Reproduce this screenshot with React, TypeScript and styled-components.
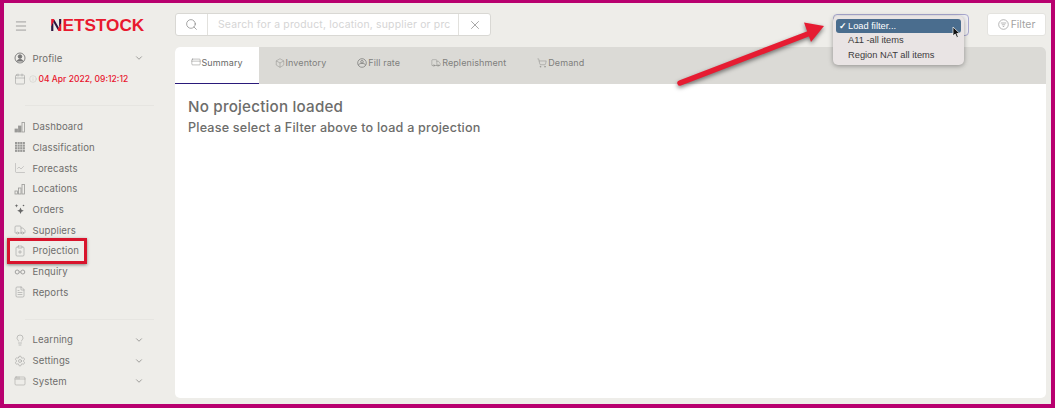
import React from 'react';
import styled, { createGlobalStyle } from 'styled-components';
import {
  AppWindow, Box, Calendar, ChartLine, ChevronDown, ClipboardPlus, CreditCard,
  FileText, Info, Lightbulb, Menu, Search, Settings, ShoppingCart, Truck, X,
} from 'lucide-react';

const GlobalStyle = createGlobalStyle`
  html, body { margin: 0; padding: 0; }
  body { font-family: Inter, "Open Sans", sans-serif; background: #fff; overflow: hidden; }
`;

const Frame = styled.div`
  position: relative;
  box-sizing: border-box;
  width: 1055px;
  height: 408px;
  border: 4px solid #b8006f;
  border-top-width: 3px;
  background: #eeede9;
  display: flex;
  color: #6d6d6b;
`;

const Sidebar = styled.aside`
  width: 171px;
  flex: none;
  display: flex;
  flex-direction: column;
`;

const Brand = styled.div`
  height: 45px;
  display: flex;
  align-items: center;
  padding-left: 10px;
  color: #808080;
`;

const Logo = styled.div`
  margin-left: 22px;
  font-family: "Liberation Sans", sans-serif;
  font-size: 17.2px;
  font-weight: 700;
  color: #e8192f;
`;

const LogoN = styled.span`
  background: linear-gradient(118deg, #e8192f 30%, #2c1540 33%, #2c1540 66%, #e8192f 69%);
  -webkit-background-clip: text;
  background-clip: text;
  color: transparent;
`;

const Row = styled.div`
  height: 20.7px;
  display: flex;
  align-items: center;
  padding-left: 10px;
  font-size: 9.6px;
  letter-spacing: 0.1px;
  color: #6e6e6c;
`;

const IconSlot = styled.span<{ $narrow?: boolean }>`
  width: ${p => (p.$narrow ? 14.5 : 18.5)}px;
  flex: none;
  display: flex;
  color: #999997;
`;

const RowChevron = styled(ChevronDown)`
  position: absolute;
  left: 130px;
  color: #8e8e8c;
`;

const DateText = styled.span`
  margin-left: 2px;
  color: #e8152e;
  font-size: 8.5px;
  font-weight: 500;
  letter-spacing: 0;
`;

const Divider = styled.div<{ $top: number; $bottom: number }>`
  height: 1px;
  margin: ${p => p.$top}px 21px ${p => p.$bottom}px 21px;
  background: #e6e5e1;
`;

const Main = styled.main`
  flex: 1;
  min-width: 0;
  display: flex;
  flex-direction: column;
  padding-right: 5px;
`;

const Toolbar = styled.div`
  height: 44px;
  flex: none;
  display: flex;
  align-items: flex-start;
  padding-top: 10px;
  box-sizing: border-box;
`;

const SearchBox = styled.div`
  width: 316px;
  height: 23px;
  box-sizing: border-box;
  display: flex;
  background: #fff;
  border: 1px solid #d9d8d4;
  border-radius: 3px;
`;

const SearchCell = styled.div`
  width: 31px;
  flex: none;
  display: flex;
  align-items: center;
  justify-content: center;
  color: #777;
`;

const SearchText = styled.div`
  flex: 1;
  min-width: 0;
  padding-left: 10px;
  border-left: 1px solid #e2e1dd;
  border-right: 1px solid #e2e1dd;
  font-size: 10.4px;
  line-height: 21px;
  letter-spacing: 0.2px;
  color: #d5d5d5;
  white-space: nowrap;
  overflow: hidden;
`;

const ToolbarRight = styled.div`
  margin-left: auto;
  display: flex;
  align-items: flex-start;
  gap: 18px;
`;

const FilterSelect = styled.div`
  width: 136px;
  height: 22px;
  margin-top: 1px;
  box-sizing: border-box;
  background: #f2f1f3;
  border: 1px solid #a9a8cf;
  border-radius: 4px;
`;

const FilterButton = styled.div`
  width: 59px;
  height: 23px;
  box-sizing: border-box;
  display: flex;
  align-items: center;
  justify-content: center;
  gap: 2px;
  background: #fff;
  border: 1px solid #e4e3df;
  border-radius: 3px;
  font-size: 10.4px;
  color: #a3a3a3;
`;

const Card = styled.section`
  width: 871px;
  height: 351px;
  background: #fff;
  border-radius: 5px;
  overflow: hidden;
`;

const TabBar = styled.div`
  height: 37px;
  display: flex;
  background: #dbdad6;
`;

const Tab = styled.div<{ $active?: boolean }>`
  display: flex;
  align-items: center;
  gap: 1px;
  padding: 0 15.5px 6px;
  font-size: 9px;
  letter-spacing: 0.1px;
  color: #7f7f7d;
  box-sizing: border-box;
  ${p => p.$active && `
    background: #fff;
    color: #6a6a68;
    border-bottom: 1px solid #2a1a7a;
    border-radius: 4px 0 0 0;
    width: 84px;
  `}
`;

const Body = styled.div`
  padding: 13px 13px;
`;

const Heading = styled.h1`
  margin: 0;
  font-size: 15.2px;
  line-height: 20px;
  font-weight: 500;
  letter-spacing: 0.2px;
  color: #6d6d6b;
`;

const SubHeading = styled.p`
  margin: 2px 0 0;
  font-size: 12.6px;
  line-height: 18px;
  font-weight: 500;
  letter-spacing: 0.2px;
  color: #6d6d6b;
`;

const Highlight = styled.div`
  position: absolute;
  left: 3px;
  top: 235px;
  width: 80px;
  height: 26px;
  box-sizing: border-box;
  border: 3px solid #d8142c;
  box-shadow: 0 1px 3px rgba(0, 0, 0, 0.45);
`;

const Arrow = styled.svg`
  position: absolute;
  left: 670px;
  top: 15px;
  overflow: visible;
  filter: drop-shadow(0 2px 2px rgba(0, 0, 0, 0.5));
`;

const Popover = styled.div`
  position: absolute;
  left: 829px;
  top: 13px;
  width: 131px;
  height: 49px;
  box-sizing: border-box;
  padding: 2.5px 3px;
  background: #e9e4e4;
  border-radius: 5px;
  box-shadow: 0 1px 5px rgba(0, 0, 0, 0.35);
  font-family: "Liberation Sans", sans-serif;
  font-size: 9.3px;
  color: #3c3a3c;
`;

const Option = styled.div<{ $selected?: boolean }>`
  position: relative;
  height: 14.7px;
  line-height: 14.7px;
  padding-left: 12px;
  border-radius: 3px;
  ${p => p.$selected && 'background: #4a6d8e; color: #fff;'}
`;

const Check = styled.span`
  position: absolute;
  left: 3px;
  font-weight: 700;
`;

const Cursor = styled.svg`
  position: absolute;
  left: 948px;
  top: 23px;
`;

const BarsIcon = ({ outline }: { outline?: boolean }) => (
  <svg width="12" height="12" viewBox="0 0 12 12" fill={outline ? 'none' : 'currentColor'} stroke="currentColor" strokeWidth="0.8">
    <rect x="1" y="8" width="2.5" height="3" />
    <rect x="4.5" y="5" width="2.5" height="6" />
    <rect x="8" y="1.5" width="2.5" height="9.5" fill="none" />
  </svg>
);

const DenseGridIcon = () => (
  <svg width="12" height="12" viewBox="0 0 12 12" fill="currentColor">
    {[0, 1, 2, 3].flatMap(r =>
      [0, 1, 2, 3].map(c => <rect key={`${r}-${c}`} x={1 + c * 2.6} y={1 + r * 2.6} width="2.1" height="2.1" />),
    )}
  </svg>
);

const OrdersIcon = () => (
  <svg width="12" height="12" viewBox="0 0 12 12" fill="#666">
    <path d="M6.5 4.500l1 2.300 2.300 1-2.300 1-1 2.300-1-2.300-2.300-1 2.300-1z" />
    <path d="M2.5 1l.5 1.300 1.300.5-1.300.5-.5 1.300-.5-1.300-1.300-.5 1.300-.5z" />
    <circle cx="9.5" cy="2.5" r="0.8" />
  </svg>
);

const EnquiryIcon = () => (
  <svg width="12" height="12" viewBox="0 0 12 12" fill="none" stroke="currentColor" strokeWidth="0.9">
    <circle cx="3.2" cy="6" r="2" />
    <circle cx="8.8" cy="6" r="2" />
    <path d="M5.2 6h1.600" />
  </svg>
);

const ProfileIcon = () => (
  <svg width="12" height="12" viewBox="0 0 12 12" fill="none" stroke="#777" strokeWidth="0.9">
    <circle cx="6" cy="6" r="5" />
    <circle cx="6" cy="4.6" r="1.8" fill="#777" />
    <path d="M2.6 9.600c.6-1.500 2-2.100 3.400-2.100s2.800.6 3.400 2.100" fill="#777" />
  </svg>
);

const FillRateIcon = () => (
  <svg width="10" height="10" viewBox="0 0 10 10" fill="none" stroke="currentColor" strokeWidth="0.8">
    <circle cx="5" cy="5" r="4.3" />
    <circle cx="5" cy="3.8" r="1.3" />
    <path d="M1.2 7c1-1.200 2.300-1.600 3.800-1.600S7.800 5.800 8.800 7" />
  </svg>
);

const FilterIcon = () => (
  <svg width="11" height="11" viewBox="0 0 11 11" fill="none" stroke="currentColor" strokeWidth="0.8">
    <circle cx="5.5" cy="5.5" r="4.8" />
    <path d="M2.8 4h5.400M3.800 5.800h3.400M4.800 7.500h1.400" />
  </svg>
);

const navItems = [
  { label: 'Dashboard', icon: <BarsIcon /> },
  { label: 'Classification', icon: <DenseGridIcon /> },
  { label: 'Forecasts', icon: <ChartLine size={12} strokeWidth={0.9} /> },
  { label: 'Locations', icon: <BarsIcon outline /> },
  { label: 'Orders', icon: <OrdersIcon /> },
  { label: 'Suppliers', icon: <Truck size={12} strokeWidth={1.1} /> },
  { label: 'Projection', icon: <ClipboardPlus size={12} strokeWidth={1.1} /> },
  { label: 'Enquiry', icon: <EnquiryIcon /> },
  { label: 'Reports', icon: <FileText size={12} strokeWidth={1.1} /> },
];

const bottomItems = [
  { label: 'Learning', icon: <Lightbulb size={12} strokeWidth={1.1} /> },
  { label: 'Settings', icon: <Settings size={12} strokeWidth={1.1} /> },
  { label: 'System', icon: <AppWindow size={12} strokeWidth={1} /> },
];

const App = () => (
  <>
    <GlobalStyle />
    <Frame>
      <Sidebar>
        <Brand>
          <Menu size={14} strokeWidth={1.2} />
          <Logo><LogoN>N</LogoN>ETSTOCK</Logo>
        </Brand>
        <Row>
          <IconSlot><ProfileIcon /></IconSlot>
          Profile
          <RowChevron size={10} />
        </Row>
        <Row>
          <IconSlot $narrow><Calendar size={12} strokeWidth={1.1} /></IconSlot>
          <Info size={8} strokeWidth={1} color="#b5b5b3" />
          <DateText>04 Apr 2022, 09:12:12</DateText>
        </Row>
        <Divider $top={16} $bottom={10} />
        {navItems.map(item => (
          <Row key={item.label}>
            <IconSlot>{item.icon}</IconSlot>
            {item.label}
          </Row>
        ))}
        <Divider $top={16} $bottom={10} />
        {bottomItems.map(item => (
          <Row key={item.label}>
            <IconSlot>{item.icon}</IconSlot>
            {item.label}
            <RowChevron size={10} />
          </Row>
        ))}
      </Sidebar>
      <Main>
        <Toolbar>
          <SearchBox>
            <SearchCell><Search size={13} strokeWidth={1.2} /></SearchCell>
            <SearchText>Search for a product, location, supplier or prc</SearchText>
            <SearchCell><X size={14} strokeWidth={1.1} /></SearchCell>
          </SearchBox>
          <ToolbarRight>
            <FilterSelect />
            <FilterButton><FilterIcon />Filter</FilterButton>
          </ToolbarRight>
        </Toolbar>
        <Card>
          <TabBar>
            <Tab $active><CreditCard size={10} strokeWidth={1} />Summary</Tab>
            <Tab><Box size={10} strokeWidth={1} />Inventory</Tab>
            <Tab><FillRateIcon />Fill rate</Tab>
            <Tab><Truck size={10} strokeWidth={1} />Replenishment</Tab>
            <Tab><ShoppingCart size={10} strokeWidth={1} />Demand</Tab>
          </TabBar>
          <Body>
            <Heading>No projection loaded</Heading>
            <SubHeading>Please select a Filter above to load a projection</SubHeading>
          </Body>
        </Card>
      </Main>
      <Highlight />
      <Arrow width="160" height="72" viewBox="0 0 160 72">
        <path d="M6 65 L139 14" stroke="#e61c32" strokeWidth="5.5" strokeLinecap="round" />
        <path d="M150 8 L130 4.5 L137 24 Z" fill="#e61c32" />
      </Arrow>
      <Popover>
        <Option $selected><Check>✓</Check>Load filter...</Option>
        <Option>A11 -all items</Option>
        <Option>Region NAT all items</Option>
      </Popover>
      <Cursor width="9" height="13" viewBox="0 0 9 13">
        <path d="M1 1 L1 10 L3.2 8 L4.8 11.5 L6.3 10.8 L4.8 7.5 L7.8 7.5 Z" fill="#111" stroke="#fff" strokeWidth="0.7" />
      </Cursor>
    </Frame>
  </>
);

export default App;
